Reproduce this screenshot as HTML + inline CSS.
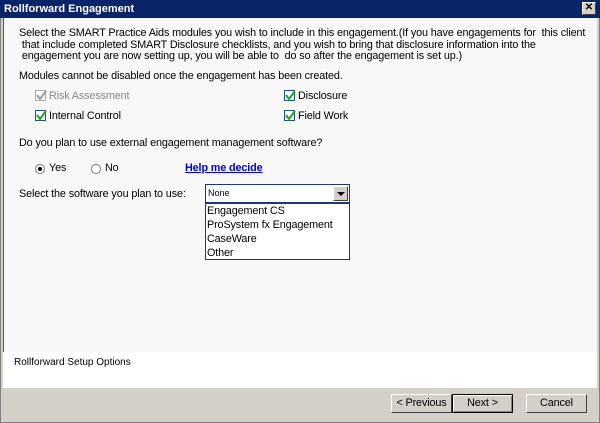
<!DOCTYPE html>
<html><head><style>
*{margin:0;padding:0;box-sizing:border-box}
body{width:600px;height:423px;position:relative;overflow:hidden;background:#d4d0c8;font-family:"Liberation Sans",sans-serif;font-size:11px;color:#000}
.a{position:absolute;white-space:nowrap}
.t{font-size:10.8px;letter-spacing:-0.12px}
.title{left:0;top:0;width:600px;height:18px;background:#0a246a;color:#fff;font-weight:bold;padding:3px 0 0 4px}
.x{position:absolute;right:4px;top:2px;width:14px;height:13px;background:#d4d0c8;border:1px solid;border-color:#fff #404040 #404040 #fff;font-size:10px;line-height:10px;text-align:center;color:#000;font-weight:bold}
.cb{position:absolute;width:11px;height:11px;border:1px solid #1c5180;background:#fff}
.cb svg{position:absolute;left:0;top:-1px}
.rd{position:absolute;width:10px;height:10px;border-radius:50%;border:1px solid #777;background:#fff}
.btn{position:absolute;height:19px;background:#d4d0c8;border:1px solid;border-color:#fff #404040 #404040 #fff;text-align:center;line-height:17px}
</style></head><body>
<div class="a title">Rollforward Engagement<div class="x">✕</div></div>
<div class="a" style="left:0;top:18px;width:600px;height:405px;border:1px solid #808080;border-top:none;background:#d4d0c8"></div>
<div class="a" style="left:3px;top:18px;width:594px;height:334px;background:#f8f8f8;border-left:1px solid #555"></div>
<div class="a" style="left:3px;top:352px;width:594px;height:36px;background:#fff"></div>
<div class="a t" style="left:19px;top:28px;line-height:11.6px">Select the SMART Practice Aids modules you wish to include in this engagement.(If you have engagements for &nbsp;this client<br>&nbsp;that include completed SMART Disclosure checklists, and you wish to bring that disclosure information into the<br>&nbsp;engagement you are now setting up, you will be able to &nbsp;do so after the engagement is set up.)</div>
<div class="a t" style="left:19px;top:70px">Modules cannot be disabled once the engagement has been created.</div>
<div class="cb" style="left:35px;top:90px;border-color:#aaa"><svg width="11" height="11"><path d="M1 5l3 4 6-8" stroke="#999" stroke-width="2" fill="none"/></svg></div>
<div class="a t" style="left:49px;top:90px;color:#888">Risk Assessment</div>
<div class="cb" style="left:35px;top:110px"><svg width="11" height="11"><path d="M1 5l3 4 6-8" stroke="#21a121" stroke-width="2" fill="none"/></svg></div>
<div class="a t" style="left:49px;top:110px">Internal Control</div>
<div class="cb" style="left:284px;top:90px"><svg width="11" height="11"><path d="M1 5l3 4 6-8" stroke="#21a121" stroke-width="2" fill="none"/></svg></div>
<div class="a t" style="left:298px;top:90px">Disclosure</div>
<div class="cb" style="left:284px;top:110px"><svg width="11" height="11"><path d="M1 5l3 4 6-8" stroke="#21a121" stroke-width="2" fill="none"/></svg></div>
<div class="a t" style="left:298px;top:110px">Field Work</div>
<div class="a t" style="left:19px;top:137px">Do you plan to use external engagement management software?</div>
<div class="rd" style="left:35px;top:164px"><div style="position:absolute;left:2px;top:2px;width:4px;height:4px;border-radius:50%;background:#000"></div></div>
<div class="a t" style="left:49px;top:162px">Yes</div>
<div class="rd" style="left:91px;top:164px"></div>
<div class="a t" style="left:105px;top:162px">No</div>
<div class="a t" style="left:185px;top:162px;color:#0000cc;font-weight:bold;text-decoration:underline">Help me decide</div>
<div class="a t" style="left:19px;top:188px">Select the software you plan to use:</div>
<div class="a" style="left:205px;top:184px;width:145px;height:19px;border:1px solid #1c3a70;background:#fff;font-size:9px;padding:3px 0 0 2px">None
<div style="position:absolute;right:1px;top:1px;width:15px;height:15px;background:#d4d0c8;border:1px solid;border-color:#fff #404040 #404040 #fff"><div style="position:absolute;left:3px;top:5px;border:4px solid transparent;border-top:4px solid #000;border-bottom:none"></div></div></div>
<div class="a t" style="left:205px;top:203px;width:145px;height:57px;border:1px solid #1c3a70;background:#fff;line-height:14px;padding-left:1px">Engagement CS<br>ProSystem fx Engagement<br>CaseWare<br>Other</div>
<div class="a" style="left:14px;top:357px;font-size:10px">Rollforward Setup Options</div>
<div class="btn t" style="left:391px;top:394px;width:61px">&lt; Previous</div>
<div class="btn t" style="left:452px;top:394px;width:61px;border:1px solid #000;box-shadow:inset 1px 1px #fff,inset -1px -1px #808080">Next &gt;</div>
<div class="btn t" style="left:526px;top:394px;width:61px">Cancel</div>
</body></html>
